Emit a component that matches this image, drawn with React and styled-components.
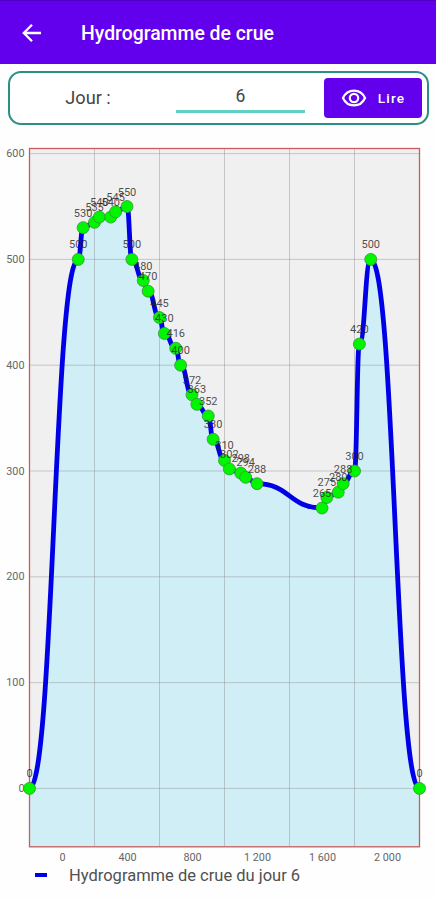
import styled, { createGlobalStyle } from 'styled-components'

const GlobalStyle = createGlobalStyle`
    body {
        margin: 0;
        background: #fefefe;
        font-family: Roboto, sans-serif;
    }
`

const Screen = styled.div`
    width: 436px;
    height: 900px;
    display: flex;
    flex-direction: column;
    overflow: hidden;
`

const AppBar = styled.header`
    height: 64px;
    flex: none;
    box-sizing: border-box;
    display: flex;
    align-items: center;
    padding: 1px 20px 0 19px;
    border-top: 1px solid #4b00bd;
    background: #6200ee;
    color: #fff;
`

const BackButton = styled.button`
    display: flex;
    padding: 0;
    border: none;
    background: none;
    color: inherit;
`

const Title = styled.h1`
    margin: 2px 0 0 37px;
    font-size: 19.4px;
    font-weight: 500;
    line-height: 24px;
    white-space: nowrap;
`

const DayForm = styled.div`
    height: 54px;
    flex: none;
    box-sizing: border-box;
    display: flex;
    align-items: center;
    margin: 7px 7px 0 8px;
    padding: 0 5px 0 0;
    border: 2px solid #2b8f86;
    border-radius: 13px;
    background: #fff;
`

const DayLabel = styled.label`
    width: 156px;
    margin-top: -2px;
    text-align: center;
    font-size: 18.2px;
    color: #444;
`

const DayField = styled.div`
    width: 129px;
    height: 30px;
    box-sizing: border-box;
    margin: 0 19px 0 10px;
    border-bottom: 3px solid #61d0c4;
    text-align: center;
    font-size: 17.5px;
    line-height: 27px;
    color: #444;
`

const ReadButton = styled.button`
    width: 98px;
    height: 40px;
    display: flex;
    align-items: center;
    justify-content: center;
    gap: 11px;
    padding: 0;
    border: none;
    border-radius: 4px;
    background: #6200ee;
    color: #fff;
    font: 500 13.6px Roboto, sans-serif;
    letter-spacing: 1.2px;
`

const ChartSvg = styled.svg`
    display: block;
    flex: none;
    margin-top: 15px;
`

const AxisLabel = styled.text`
    font-size: 10.8px;
    fill: #666;
`

const ValueLabel = styled.text`
    font-size: 11px;
    fill: #222;
    fill-opacity: 0.8;
    text-anchor: middle;
`

const Legend = styled.div`
    display: flex;
    align-items: center;
    height: 24px;
    padding-left: 35px;
    font-size: 16.5px;
    color: #505050;
    white-space: nowrap;
`

const LegendMark = styled.span`
    width: 12px;
    height: 4px;
    margin-right: 22px;
    background: #0000e8;
`

// Plot area edges, in chart units
const LEFT = 29.5
const RIGHT = 419.5
const TOP = 148.5
const BOTTOM = 846.8

const points = [
    [0, 0], [300, 500], [330, 530], [400, 535], [430, 540], [500, 540],
    [530, 545], [600, 550], [630, 500], [700, 480], [730, 470], [800, 445],
    [830, 430], [900, 416], [930, 400], [1000, 372], [1030, 363],
    [1100, 352], [1130, 330], [1200, 310], [1230, 302], [1300, 298],
    [1330, 294], [1400, 288], [1800, 265], [1830, 275], [1900, 280],
    [1930, 288], [2000, 300], [2030, 420], [2100, 500], [2400, 0],
]

const scaleX = (v) => LEFT + v * 0.1625
const scaleY = (v) => 788.4 - v * 1.058

const dots = points.map(([time, value]) => ({ x: scaleX(time), y: scaleY(value), value }))

const linePath = dots.map(({ x, y }, i) => {
    if (i === 0) return `M${x} ${y}`
    const prev = dots[i - 1]
    const middle = (prev.x + x) / 2
    return `C${middle} ${prev.y} ${middle} ${y} ${x} ${y}`
}).join(' ')

const xTicks = [400, 800, 1200, 1600, 2000]
const yTicks = [0, 100, 200, 300, 400, 500, 600]
const xLabels = ['0', '400', '800', '1 200', '1 600', '2 000']

function BackIcon() {
    return (
        <svg width='25' height='24' viewBox='0 0 25 24' fill='none' stroke='currentColor' strokeWidth='2.3'>
            <path d='M22 12H5.500M13 3.800L4.800 12L13 20.200' />
        </svg>
    )
}

function EyeIcon() {
    return (
        <svg width='26' height='22' viewBox='0 0 26 22' fill='none' stroke='currentColor' strokeWidth='2.2'>
            <path d='M2 11C4.1 6.3 8.2 3.6 13 3.6S21.9 6.3 24 11c-2.1 4.7-6.2 7.4-11 7.4S4.100 15.700 2 11z' />
            <circle cx='13' cy='11' r='4.2' />
        </svg>
    )
}

function Hydrograph() {
    return (
        <ChartSvg width='436' height='723' viewBox='0 140 436 723'>
            <rect x={LEFT} y={TOP} width={RIGHT - LEFT} height={BOTTOM - TOP} fill='#f0f0f0' />
            <path d={`${linePath} V${BOTTOM} H${LEFT} Z`} fill='#d0eef6' />
            <g stroke='#808080' strokeOpacity='0.38'>
                {xTicks.map((v) => (
                    <line key={v} x1={scaleX(v)} x2={scaleX(v)} y1={TOP} y2={BOTTOM} />
                ))}
                {yTicks.map((v) => (
                    <line key={v} x1={LEFT} x2={RIGHT} y1={scaleY(v)} y2={scaleY(v)} />
                ))}
            </g>
            {yTicks.map((v) => (
                <AxisLabel key={v} x='24.5' y={scaleY(v) + 3.5} textAnchor='end'>{v}</AxisLabel>
            ))}
            {xLabels.map((label, i) => (
                <AxisLabel key={label} x={62.5 + i * 65} y='861.3' textAnchor='middle'>{label}</AxisLabel>
            ))}
            <rect x={LEFT} y={TOP} width={RIGHT - LEFT} height={BOTTOM - TOP} fill='none' stroke='#c75d60' strokeWidth='1.3' />
            <path d={linePath} fill='none' stroke='#0000e8' strokeWidth='4.8' />
            {dots.map(({ x, y }) => (
                <circle key={x} cx={x} cy={y} r='6' fill='#00f500' stroke='#389438' strokeWidth='0.8' />
            ))}
            {dots.map(({ x, y, value }) => (
                <ValueLabel key={x} x={x} y={y - 11}>{value}</ValueLabel>
            ))}
        </ChartSvg>
    )
}

export default function App() {
    return (
        <Screen>
            <GlobalStyle />
            <AppBar>
                <BackButton aria-label='Retour'>
                    <BackIcon />
                </BackButton>
                <Title>Hydrogramme de crue</Title>
            </AppBar>
            <DayForm>
                <DayLabel>Jour :</DayLabel>
                <DayField>6</DayField>
                <ReadButton>
                    <EyeIcon />
                    <span>Lire</span>
                </ReadButton>
            </DayForm>
            <Hydrograph />
            <Legend>
                <LegendMark />
                <span>Hydrogramme de crue du jour 6</span>
            </Legend>
        </Screen>
    )
}
